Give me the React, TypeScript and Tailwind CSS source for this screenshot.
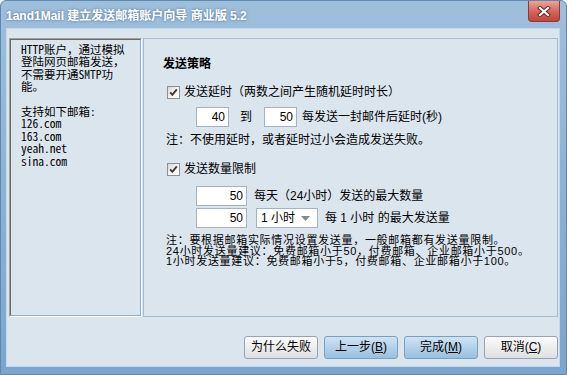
import React from "react";

const Check: React.FC = () => (
  <span className="flex h-[13px] w-[13px] shrink-0 items-center justify-center border border-[#8e8f8f] bg-gradient-to-br from-[#d8d8d8] via-[#f2f2f2] to-[#ffffff]">
    <svg viewBox="0 0 11 11" className="h-[11px] w-[11px]">
      <path d="M2.2 5.4 L4.4 7.8 L8.8 2.4" stroke="#3a3a3a" strokeWidth="1.9" fill="none" />
    </svg>
  </span>
);

const Field: React.FC<{ value: string; width: string }> = ({ value, width }) => (
  <div className={`${width} h-[20px] shrink-0 border border-[#a2b3c3] bg-white pr-[3px] text-right leading-[18px]`}>
    {value}
  </div>
);

const Btn: React.FC<{ active?: boolean; children: React.ReactNode }> = ({ active, children }) => (
  <button
    className={`h-[23px] w-[74px] rounded-[3px] border text-[12px] leading-[21px] text-black ${
      active
        ? "border-[#7a9fc0] bg-gradient-to-b from-[#cfe3f3] to-[#98c0e0]"
        : "border-[#96a3b0] bg-gradient-to-b from-[#fbfbfb] to-[#dedfe0]"
    }`}
  >
    {children}
  </button>
);

export default function App() {
  return (
    <div className="h-[375px] w-[567px] bg-white font-['Liberation_Sans','Noto_Sans_CJK_SC',sans-serif] text-[12px] text-black">
      <div className="flex h-full w-full flex-col overflow-hidden rounded-t-[6px] border border-[#5d88b2] bg-gradient-to-b from-[#9ebfdc] to-[#7aa6cd]">
        {/* title bar */}
        <div className="flex h-[27px] shrink-0 items-start justify-between">
          <div className="pl-[5px] pt-[7px] text-[12px] font-bold leading-[16px] text-white [text-shadow:0_0_3px_rgba(20,50,90,0.6)]">
            1and1Mail 建立发送邮箱账户向导 商业版 5.2
          </div>
          <div className="mr-[6px] flex h-[21px] w-[32px] items-center justify-center rounded-b-[4px] border border-t-0 border-[#8b3a34] bg-gradient-to-b from-[#eba49a] via-[#d8675c] to-[#c3433a]">
            <svg viewBox="0 0 14 11" className="h-[11px] w-[14px]">
              <path d="M3 2 L11 9 M11 2 L3 9" stroke="#5a2320" strokeWidth="4" strokeLinecap="square" />
              <path d="M3 2 L11 9 M11 2 L3 9" stroke="#ffffff" strokeWidth="2.2" strokeLinecap="square" />
            </svg>
          </div>
        </div>

        {/* client */}
        <div className="mb-[7px] ml-[5px] mr-[6px] flex flex-1 flex-col border border-[#c6d7e7] bg-[#dbe5ee] pl-[2px] pr-[1px] pt-[9px]">
          <div className="flex h-[279px]">
            {/* left info panel */}
            <div className="w-[133px] border border-b-white border-l-[#a0a0a0] border-r-white border-t-[#a0a0a0]">
              <div className="h-full border border-b-[#8fb0cc] border-l-[#6a6a6a] border-r-[#8fb0cc] border-t-[#6a6a6a] pl-[10px] pt-[3px] font-['Noto_Sans_Mono_CJK_SC','Noto_Sans_CJK_SC',monospace] text-[11.5px] leading-[12.4px]">
                HTTP账户，通过模拟
                <br />
                登陆网页邮箱发送，
                <br />
                不需要开通SMTP功
                <br />
                能。
                <br />
                <br />
                支持如下邮箱:
                <br />
                126.com
                <br />
                163.com
                <br />
                yeah.net
                <br />
                sina.com
              </div>
            </div>

            {/* right settings panel */}
            <div className="ml-px flex-1 border border-[#a6bbcf] pl-[19px]">
              <div className="mt-[17px] h-[16px] font-bold leading-[16px]">发送策略</div>

              <div className="ml-[4px] mt-[13px] flex h-[14px] items-center">
                <Check />
                <span className="ml-[4px] leading-[14px]">发送延时（两数之间产生随机延时时长）</span>
              </div>

              <div className="ml-[33px] mt-[8px] flex h-[20px] items-center">
                <Field value="40" width="w-[33px]" />
                <span className="ml-[11px]">到</span>
                <span className="ml-[12px]">
                  <Field value="50" width="w-[33px]" />
                </span>
                <span className="ml-[5px]">每发送一封邮件后延时(秒)</span>
              </div>

              <div className="ml-[3px] mt-[6px] h-[14px] leading-[14px]">注：不使用延时，或者延时过小会造成发送失败。</div>

              <div className="ml-[4px] mt-[15px] flex h-[14px] items-center">
                <Check />
                <span className="ml-[4px] leading-[14px]">发送数量限制</span>
              </div>

              <div className="ml-[33px] mt-[10px] flex h-[20px] items-center">
                <Field value="50" width="w-[51px]" />
                <span className="ml-[7px]">每天（24小时）发送的最大数量</span>
              </div>

              <div className="ml-[33px] mt-[2px] flex h-[20px] items-center">
                <Field value="50" width="w-[51px]" />
                <div className="ml-[9px] flex h-[20px] w-[62px] items-center justify-between border border-[#a2b3c3] bg-white pl-[4px] pr-[7px]">
                  <span>1 小时</span>
                  <svg viewBox="0 0 9 5" className="h-[5px] w-[9px]">
                    <path d="M0 0 H9 L4.5 5 Z" fill="#7d8c9b" />
                  </svg>
                </div>
                <span className="ml-[7px]">每 1 小时 的最大发送量</span>
              </div>

              <div className="ml-[3px] mt-[7px] text-[11px] leading-[10.5px] tracking-[0.7px]">
                <div>注：要根据邮箱实际情况设置发送量，一般邮箱都有发送量限制。</div>
                <div>24小时发送量建议：免费邮箱小于50，付费邮箱、企业邮箱小于500。</div>
                <div>1小时发送量建议：免费邮箱小于5，付费邮箱、企业邮箱小于100。</div>
              </div>
            </div>
          </div>

          {/* buttons */}
          <div className="mt-[19px] flex justify-end gap-[6px]">
            <Btn>为什么失败</Btn>
            <Btn active>
              上一步(<span className="underline">B</span>)
            </Btn>
            <Btn active>
              完成(<span className="underline">M</span>)
            </Btn>
            <Btn>
              取消(<span className="underline">C</span>)
            </Btn>
          </div>
        </div>
      </div>
    </div>
  );
}
